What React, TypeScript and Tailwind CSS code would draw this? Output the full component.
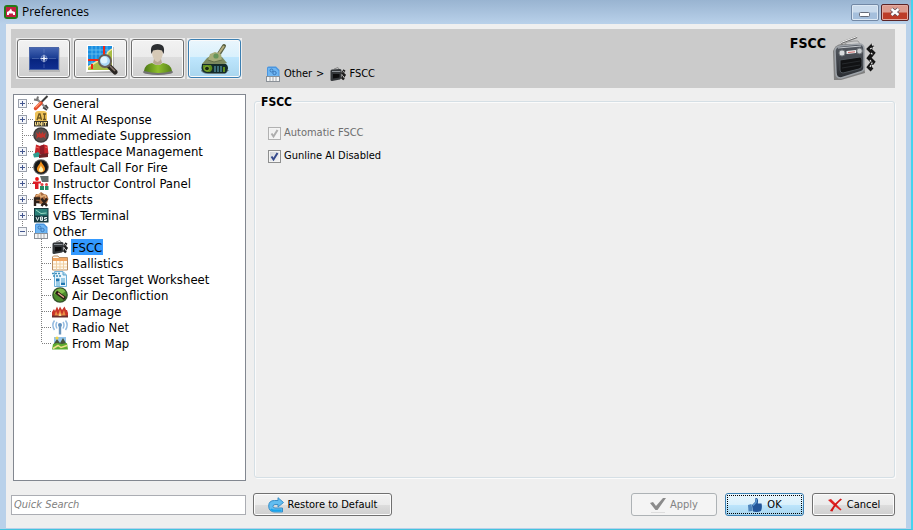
import { useState } from "react";
import type { ReactNode } from "react";

type IconProps = { name: string; className?: string };

const art: Record<string, ReactNode> = {
  tools: (
    <>
      <path d="M4 4 L13 13" stroke="#8d8d8d" strokeWidth="2.200" />
      <path d="M1 4.500 L4 5 L5 1.500" stroke="#777" strokeWidth="2" fill="none" />
      <path d="M10 12.500 L14 15 M12.500 10 L15 13.500" stroke="#444" strokeWidth="1.800" />
      <path d="M14.500 1 L8 7.500" stroke="#3d3d3d" strokeWidth="2" />
      <path d="M8 8 L2.500 13.500" stroke="#e34a2a" strokeWidth="3.400" strokeLinecap="round" />
      <path d="M7.500 7.500 L2.500 12.500" stroke="#ff9d73" strokeWidth="1.200" />
    </>
  ),
  unit: (
    <>
      <path d="M2 2 Q3 0 5 0 H11 Q13 0 14 2 V10 H2Z" fill="#eec25a" />
      <path d="M4 9 L6 3 H7 L8.500 9 M5 7 H8 M10 3 H13 M11.500 3 V8.500 M10 8.500 H13" stroke="#6b5520" strokeWidth="1.300" fill="none" />
      <rect x="1" y="10" width="14" height="5.500" fill="#3a372d" />
      <path d="M2.500 11 V14 H4.500 V11 M6 14.500 V11 L8.500 14.500 V11 M10 11 V14.500 M11 11.500 H14 M12.500 11 V14.500" stroke="#f2d987" fill="none" />
    </>
  ),
  suppress: (
    <>
      <circle cx="8" cy="8" r="7.800" fill="#3a3a3a" />
      <circle cx="8" cy="8" r="6.500" fill="#58504e" />
      <path d="M3 5 L5.500 7.500 L6 4.500 L8 7 L10 4.500 L10.500 7.500 L13 5 L12 9 L13 12 L10.500 10 L8 11 L5.500 10 L3 12 L4 9Z" fill="#c2352d" />
    </>
  ),
  battle: (
    <>
      <path d="M3 1.500 L7 3 L11 1.500 L14.500 2.500 L15.500 11 L11 12 L7 11 L1.500 12.500Z" fill="#c7262a" />
      <path d="M7 3 L11 1.500 L11.500 12 L7 11Z" fill="#8f1c27" />
      <path d="M0 11 L5 9 L7 11 L6 14 L1 14.500Z" fill="#2f9c90" />
      <path d="M6 11.500 L15 10 V14 L6 15Z" fill="#6e2226" />
      <path d="M3 4 L6 5 M12 4 L14 4.500" stroke="#ee6255" />
    </>
  ),
  fire: (
    <>
      <circle cx="8" cy="8" r="7.800" fill="#5a5a5a" />
      <circle cx="8" cy="8" r="6.800" fill="#171717" />
      <path d="M8 1.500 C8 4.500 12.500 7 12 10.500 C11.500 14.500 4.500 14.500 4 10.500 C3.500 7.500 7 6 8 1.500Z" fill="#f08f1a" />
      <path d="M8 6 C8 8.500 10.500 9 10.200 11.200 C9.800 13.500 6.200 13.500 5.900 11.200 C5.700 9.500 7.500 8.500 8 6Z" fill="#fff2ae" />
    </>
  ),
  instructor: (
    <>
      <path d="M7 1 H15.500 V7 H9Z" fill="#616c6a" />
      <circle cx="4" cy="4" r="1.900" fill="#e11" />
      <path d="M0 6.500 H8 V8.500 H5.500 V14 H2 V9 H0Z" fill="#dc1a25" />
      <circle cx="9" cy="9.500" r="1.500" fill="#e14545" />
      <path d="M7 11 H11 V15 H7Z" fill="#238b65" />
      <circle cx="13.500" cy="9.500" r="1.500" fill="#e14545" />
      <path d="M12 11 H15.500 V15 H12Z" fill="#238b65" />
    </>
  ),
  effects: (
    <>
      <path d="M1 7 L3 3 L6 3 L8 1 L11 3 L14 4 L15.500 8 L14 12 L8 13 L1 11Z" fill="#a96c42" />
      <path d="M3 5 L7 3 L8 6 L12 4 L13 7" stroke="#e3ae78" strokeWidth="1.500" fill="none" />
      <path d="M2 15 V7.500 H7 M2 11 H6.500 M8.500 7.500 L14 15 M14 7.500 L8.500 15" stroke="#2d211a" strokeWidth="2.400" fill="none" />
    </>
  ),
  vbs: (
    <>
      <rect x="1" y="1" width="14.500" height="14.500" fill="#17393e" />
      <path d="M2 2 H14.500 V8.500 H2Z" fill="#2a8078" />
      <path d="M3 3 L8 6.500 L13.500 6" stroke="#9adbc5" fill="none" />
      <path d="M3 10 L4.500 13.500 L6 10 M7.500 10 V13.500 H9.500 V10 H7.500 M7.500 12 H9.500 M14 10.500 H11.500 V12 H13.500 V13.500 H11" stroke="#e5eeee" fill="none" />
    </>
  ),
  other: (
    <>
      <path d="M2 2 Q2 .5 3.500 .5 H11 L14.500 4 V11 H2Z" fill="#4a96e0" />
      <path d="M3 2 H10.500 L13.500 5 V10 H3Z" fill="#6fb6f2" />
      <circle cx="6.500" cy="4.500" r="1.500" stroke="#3a76b8" fill="none" />
      <circle cx="9.500" cy="7" r="1.700" stroke="#3a76b8" fill="none" />
      <rect x="1.500" y="10.500" width="13" height="5" fill="#f5f5f5" stroke="#8a9097" />
      <path d="M5 11 V15 M8 11 V15 M11 11 V15" stroke="#a5a9ad" />
    </>
  ),
  radio: (
    <>
      <path d="M4 3 L8 1.500 L9 3" stroke="#888" fill="none" />
      <path d="M.5 5 Q.5 3.500 2 3.500 L10 3 Q11.500 3 11.500 4.500 V12 L10 13.500 L2 15 Q.5 15 .5 14Z" fill="#34373a" />
      <path d="M2 5.500 H10.500" stroke="#8d9297" />
      <path d="M3 8 H9.500 V11.500 L3 12.500Z" fill="#0d0d0e" />
      <path d="M14.500 4 L12.500 7 L14.500 9 L12.500 12 L14 13.500" stroke="#1d1d1d" strokeWidth="2.400" fill="none" />
      <path d="M14 5 L13 6.500 M13.500 10 V11.500" stroke="#b5b5b5" />
    </>
  ),
  table: (
    <>
      <path d="M.5 15 V2 L1.500 1 H6 L7 2.500 H15.500 V15Z" fill="#fffaf0" stroke="#b98d62" />
      <rect x="1" y="3" width="14" height="3" fill="#f2a661" />
      <path d="M1 9 H15 M1 12 H15 M4.500 6 V15 M8 6 V15 M11.500 6 V15" stroke="#f0cfa0" />
    </>
  ),
  sheet: (
    <>
      <path d="M2.500 .5 H11 L14.500 4 V15.500 H2.500Z" fill="#eaf6fd" stroke="#6fb0d8" />
      <path d="M11 1 V4 H14" fill="#a5d5ef" stroke="#5da2ca" />
      <path d="M0 2.500 H9 M1 5 H10" stroke="#3f8fb9" strokeWidth="1.500" strokeDasharray="2 1" />
      <path d="M4 7.500 H7.500 V10.500 H4Z M9 11.500 H13 V14 H9Z" fill="#2078b2" />
      <path d="M9 8 H13 M9 10 H13 M4 12 H8 M4 14 H8" stroke="#4aa1ce" />
    </>
  ),
  air: (
    <>
      <circle cx="8" cy="8" r="7.800" fill="#33512a" />
      <circle cx="8" cy="8" r="6.500" fill="#4c8c2d" />
      <path d="M2 7 A6.300 6.300 0 0 1 13.500 4.500 L8 8Z" fill="#80bd4a" />
      <path d="M4 5 L13 11.500" stroke="#2b1d14" strokeWidth="3.400" />
      <path d="M6 6 L12 10.500" stroke="#e8b092" strokeWidth="1.300" />
    </>
  ),
  damage: (
    <>
      <path d="M0 14 V9 L2 6 L3 8 L5 3.500 L6.500 7 L8 3.500 L10 7 L12.500 3.500 L14 7 L15 7 L16 10 V14Z" fill="#c8352a" />
      <path d="M2 14 L4 8 L6 12 L8 6.500 L10 12 L12 7 L14 14Z" fill="#ea8d45" />
      <path d="M0 12.500 H16 V14.500 H0Z" fill="#6b2f2c" />
      <path d="M6.500 13 L8 9.500 L9.500 13Z" fill="#f7d88e" />
    </>
  ),
  antenna: (
    <>
      <circle cx="8" cy="6" r="2" fill="#5f8fbd" />
      <path d="M8 7 V15.500" stroke="#6a95bd" strokeWidth="2.400" />
      <path d="M5 3 Q3 6 5 9.500 M2.500 1.500 Q-.8 6 2.500 11 M11 3 Q13 6 11 9.500 M13.500 1.500 Q16.800 6 13.500 11" stroke="#94bbe0" strokeWidth="1.500" fill="none" />
    </>
  ),
  frommap: (
    <>
      <path d="M2 2 H14 V9 H2Z" fill="#93c4ea" />
      <path d="M1 10 L5 4 L8 8 L11 3 L15 10Z" fill="#46543c" />
      <path d="M1 9 L5 8 L10 9 L15 8 L16 14.500 H0Z" fill="#5fab30" />
      <path d="M1 13.500 L6 10.500 L9 12.500 L15 10.500" stroke="#efe08a" strokeWidth="1.500" fill="none" />
      <circle cx="5" cy="3" r="1.600" fill="#f0d44a" />
    </>
  ),
};

function Icon({ name, className = "size-4" }: IconProps) {
  return (
    <svg viewBox="0 0 16 16" className={`${className} shrink-0`} aria-hidden="true">
      {art[name]}
    </svg>
  );
}

function AppIcon() {
  return (
    <svg viewBox="0 0 14 14" className="size-[14px]" aria-hidden="true">
      <rect width="14" height="14" rx="3" fill="#237a17" />
      <rect x="2" y="2" width="10" height="10" fill="#c31f42" />
      <path d="M3 7 L5 6 L7 3.500 L8 6 L11 7 V10 H9 V8.500 H5 V10 H3Z" fill="#fff" />
    </svg>
  );
}

function NatoFlag() {
  return (
    <svg viewBox="0 0 32 26" className="h-[26px] w-8" aria-hidden="true">
      <defs>
        <linearGradient id="flag" x1="0" y1="0" x2="0" y2="1">
          <stop stopColor="#4767b3" />
          <stop offset=".5" stopColor="#173a91" />
          <stop offset=".55" stopColor="#07247f" />
          <stop offset="1" stopColor="#102f91" />
        </linearGradient>
      </defs>
      <rect x="1" y="2" width="31" height="24" fill="#999" opacity=".5" />
      <rect x="1.500" y="1.500" width="29" height="22" fill="url(#flag)" stroke="#4b66a7" />
      <path d="M4 12.500 H11 M21 12.500 H28 M16 3 V7 M16 18 V22" stroke="#8094cb" opacity=".4" />
      <circle cx="16" cy="12.500" r="3" stroke="#aabce4" strokeWidth=".6" fill="none" />
      <path d="M16 8 L16.800 11.700 L20.500 12.500 L16.800 13.300 L16 17 L15.200 13.300 L11.500 12.500 L15.200 11.700Z" fill="#f4f8ff" />
    </svg>
  );
}

function MapSearch() {
  return (
    <svg viewBox="0 0 34 32" className="h-8 w-[34px]" aria-hidden="true">
      <path d="M3 4 H30 V30 H3Z" fill="#777" opacity=".4" />
      <path d="M3 2 H29 V28 L2 29Z" fill="#fff" />
      <path d="M4 3 H28 V26 H4Z" fill="#1b8ee0" />
      <path d="M8 3 V26 M12 3 V26 M16 3 V26 M23 3 V26 M4 7 H28 M4 11 H28 M4 20 H27" stroke="#76c8ef" strokeWidth=".7" />
      <path d="M28 6 L24 9 L21 17 L14 18 L9 21 L4 24 V27 H28Z" fill="#a8bd44" />
      <path d="M28 6 L24 9 L21 17 L14 18 L9 21 L4 24" fill="none" stroke="#f5e69a" strokeWidth="1.500" />
      <path d="M20 3 V16 M4 17 H17 M8 21 V26" stroke="#f32516" strokeWidth="2" />
      <path d="M25 23 L31 29" stroke="#292522" strokeWidth="5" strokeLinecap="round" />
      <path d="M26 23 L31 28" stroke="#85736a" strokeWidth="1.500" />
      <circle cx="21" cy="18" r="6" fill="#a9d6f5" stroke="#665d58" strokeWidth="2" />
      <circle cx="20" cy="17" r="3.500" fill="#eefaff" opacity=".8" />
    </svg>
  );
}

function Person() {
  return (
    <svg viewBox="0 0 34 34" className="size-[34px]" aria-hidden="true">
      <defs>
        <linearGradient id="shirt" x1="0" x2="1">
          <stop stopColor="#4b7716" />
          <stop offset=".5" stopColor="#90c02c" />
          <stop offset="1" stopColor="#547f19" />
        </linearGradient>
      </defs>
      <ellipse cx="17" cy="30" rx="15" ry="3" fill="#333" opacity=".6" />
      <path d="M3 29 Q4 22 11 21 Q17 25 22 21 Q30 22 31 29 Q18 33 3 29Z" fill="url(#shirt)" />
      <path d="M13 17 H20 L21 21 Q17 25 12 21Z" fill="#b7a78f" />
      <path d="M11 9 Q11 18 16.500 20 Q22 18 22 9 Q22 5 17 5 Q11 5 11 9Z" fill="#d6c9b6" />
      <path d="M10.500 12 Q8 2 16.500 2 Q25 2 22.500 12 L21 8.500 Q17 7 12 8.500Z" fill="#2c2e31" />
    </svg>
  );
}

function Tank() {
  return (
    <svg viewBox="0 0 34 34" className="size-[34px]" aria-hidden="true">
      <path d="M3 28 Q3 31 10 32 L27 32 L31 28Z" fill="#47534e" opacity=".7" />
      <path d="M19 15 L26 4" stroke="#596143" strokeWidth="4" strokeLinecap="round" />
      <path d="M19 14 L26 4" stroke="#b6ae7e" strokeWidth="2" />
      <path d="M4 22 L9 16 L14 13 L24 15 L29 21 L21 24 H6Z" fill="#7c8a5f" />
      <path d="M10 18 L12 12 L17 10 L23 12 L24 18 L16 20Z" fill="#a5ad7a" />
      <path d="M10 18 L16 20 L24 18" stroke="#66714a" fill="none" />
      <circle cx="18" cy="14" r="2.600" fill="#66955a" />
      <path d="M4 22 H28 Q32 25 28 31 H8 Q2 30 4 22Z" fill="#142b2b" />
      <path d="M5 23 H13 Q16 27 12 30 H9 Q4 29 5 23Z" fill="#5d8d1c" />
      <circle cx="9" cy="26.500" r="2.400" fill="#182811" stroke="#8cb338" />
      <path d="M17 24 V30 M20 24 V30 M23 24 V30" stroke="#3c6d78" strokeWidth="2" />
      <path d="M26 25 V30" stroke="#5d8d1c" strokeWidth="2" />
    </svg>
  );
}

function LargeRadio() {
  return (
    <svg viewBox="0 0 46 48" className="h-12 w-[46px]" aria-hidden="true">
      <defs>
        <linearGradient id="radio-body" x1="0" y1="0" x2="0" y2="1">
          <stop stopColor="#565b63" />
          <stop offset="1" stopColor="#2a2d32" />
        </linearGradient>
      </defs>
      <path d="M2 45 L1 16 Q3 10 9 9 L29 9 L33 38 L9 45Z" fill="#111" opacity=".4" />
      <path d="M9 8 L25 2" stroke="#6b6b6b" strokeWidth="2" />
      <path d="M9 7.500 L25 1.500" stroke="#f3f3f3" />
      <path d="M11 10 Q15 6 22 6 L26 6 L28 9" stroke="#999" fill="none" />
      <path d="M3 16 Q3 12 8 11 L27 9 Q32 9 32 14 V33 Q32 36 28 37 L9 43 Q4 43 4 38Z" fill="url(#radio-body)" stroke="#9da2a8" strokeWidth="1.500" />
      <path d="M6 13 L29 11" stroke="#c5c9cd" />
      <circle cx="10" cy="18" r="3" fill="#d9dcde" stroke="#777c80" />
      <circle cx="27.500" cy="16" r="2.800" fill="#c9cdd0" stroke="#777c80" />
      <path d="M14.500 16 L24 15 V18 L14.500 19Z" fill="#f2f2f2" />
      <path d="M16 17.500 L23 16.800" stroke="#c66" />
      <path d="M8 25 L28 22 Q30 22 30 25 V31 Q30 33 27 34 L11 38 Q8 38 8 35Z" fill="#111214" stroke="#4d5359" />
      <path d="M10 29 L28 26 M10 33 L28 30" stroke="#26292c" />
      <path d="M41 10 L37 14 L41 18 L37 23 L41 27 L37 32 L40 35" stroke="#161616" strokeWidth="4" fill="none" />
      <path d="M40 9 L42 12 L38 14 M39 18 L41 20 M38 25 L40 28 L38 32 M40 30 L42 32" stroke="#e5e5e5" strokeWidth="1.200" fill="none" strokeDasharray="2 1" />
    </svg>
  );
}

type TreeItem = { icon: string; label: string; leaf?: boolean };

const topics: TreeItem[] = [
  { icon: "tools", label: "General" },
  { icon: "unit", label: "Unit AI Response" },
  { icon: "suppress", label: "Immediate Suppression", leaf: true },
  { icon: "battle", label: "Battlespace Management" },
  { icon: "fire", label: "Default Call For Fire" },
  { icon: "instructor", label: "Instructor Control Panel" },
  { icon: "effects", label: "Effects" },
  { icon: "vbs", label: "VBS Terminal" },
  { icon: "other", label: "Other" },
];

const children: TreeItem[] = [
  { icon: "radio", label: "FSCC" },
  { icon: "table", label: "Ballistics" },
  { icon: "sheet", label: "Asset Target Worksheet" },
  { icon: "air", label: "Air Deconfliction" },
  { icon: "damage", label: "Damage" },
  { icon: "antenna", label: "Radio Net" },
  { icon: "frommap", label: "From Map" },
];

function Branch({ first, last, leaf, open }: { first: boolean; last: boolean; leaf?: boolean; open: boolean }) {
  return (
    <svg viewBox="0 0 19 16" className="h-4 w-[19px] shrink-0" shapeRendering="crispEdges" aria-hidden="true">
      <path d={`M8.500 ${first ? 8 : 0} V${last ? 8 : 16} M8 8.500 H19`} stroke="#808080" strokeDasharray="1 1" />
      {!leaf && (
        <>
          <rect x="4.500" y="4.500" width="8" height="8" fill="#f4f6fa" stroke="#9aa0ab" />
          <path d={open ? "M6 8.500 H11" : "M6 8.500 H11 M8.500 6 V11"} stroke="#44578f" />
        </>
      )}
    </svg>
  );
}

function ChildBranch({ last }: { last: boolean }) {
  return (
    <svg viewBox="0 0 38 16" className="h-4 w-[38px] shrink-0" shapeRendering="crispEdges" aria-hidden="true">
      <path d={`M27.500 0 V${last ? 8 : 16} M28 8.500 H38`} stroke="#808080" strokeDasharray="1 1" />
    </svg>
  );
}

function Tree() {
  const [selected, setSelected] = useState("FSCC");
  const label = (text: string) => (
    <button
      type="button"
      onClick={() => setSelected(text)}
      className={`ml-[3px] h-4 px-px pt-px leading-4 whitespace-nowrap ${selected === text ? "bg-[#3399ff]" : ""}`}
    >
      {text}
    </button>
  );
  return (
    <ul role="tree" aria-label="Preference topics" className="ml-0.5 flex-1 border border-[#828790] bg-white text-[13px]">
      {topics.map((t, i) => (
        <li key={t.label} role="treeitem" aria-expanded={t.label === "Other"} aria-selected={selected === t.label}>
          <div className="flex h-4">
            <Branch first={i === 0} last={i === topics.length - 1} leaf={t.leaf} open={t.label === "Other"} />
            <Icon name={t.icon} />
            {label(t.label)}
          </div>
          {t.label === "Other" && (
            <ul role="group">
              {children.map((c, j) => (
                <li key={c.label} role="treeitem" aria-selected={selected === c.label} className="flex h-4">
                  <ChildBranch last={j === children.length - 1} />
                  <Icon name={c.icon} />
                  {label(c.label)}
                </li>
              ))}
            </ul>
          )}
        </li>
      ))}
    </ul>
  );
}

function ToolButton({ label, active, children: content }: { label: string; active?: boolean; children: ReactNode }) {
  return (
    <div className="bg-[#ededed] p-px">
      <button
        type="button"
        aria-label={label}
        className={`flex h-[39px] w-[53px] items-center justify-center rounded-[3px] border ${
          active
            ? "border-[#3c7fb1] bg-[linear-gradient(#eaf6fd,#d9f0fc_47%,#bee6fd_47%,#a9d6ee)]"
            : "border-[#707070] bg-[linear-gradient(#f2f2f2,#ebebeb_47%,#dddddd_47%,#cfcfcf)]"
        } inset-shadow-[0_0_0_1px_#fafafa]`}
      >
        {content}
      </button>
    </div>
  );
}

function Check({ label, disabled }: { label: string; disabled?: boolean }) {
  const [on, setOn] = useState(true);
  return (
    <label className={`flex h-[13px] items-center gap-[3px] ${disabled ? "text-[#6d6d6d]" : ""}`}>
      <span className="relative size-[13px]">
        <input
          type="checkbox"
          checked={on}
          disabled={disabled}
          onChange={(e) => setOn(e.target.checked)}
          className="block size-[13px] appearance-none border border-[#8e8f8f] bg-linear-to-br from-[#cfd3d9] to-[#f6f6f6] inset-shadow-[0_0_0_1px_#f4f4f4] disabled:border-[#b1b1b1] disabled:from-[#eeeeee]"
        />
        {on && (
          <svg viewBox="0 0 13 13" className="pointer-events-none absolute inset-0" aria-hidden="true">
            <path d="M3.500 6.500 L5.500 9.500 L9.500 3" fill="none" stroke={disabled ? "#adadad" : "#34498c"} strokeWidth="2" />
          </svg>
        )}
      </span>
      {label}
    </label>
  );
}

const normalButton =
  "flex h-[23px] items-center justify-center rounded-[3px] border border-[#707070] bg-[linear-gradient(#f2f2f2,#ebebeb_50%,#dddddd_50%,#cfcfcf)] pt-px inset-shadow-[0_0_0_1px_#fcfcfc]";

export default function App() {
  return (
    <div className="flex min-h-screen flex-col border-r-2 border-b border-r-[#45d3ee] border-b-[#45c3de] bg-[#b9d1ea] font-['DejaVu_Sans_Condensed','DejaVu_Sans',sans-serif] text-[11px] text-black">
      <header className="flex h-6 items-center bg-linear-to-b from-[#99b4d1] to-[#b9d1ea] pr-0.5 pl-1">
        <AppIcon />
        <h1 className="ml-1 font-['Open_Sans','Noto_Sans',sans-serif] text-[12px]">Preferences</h1>
        <div className="ml-auto flex gap-0.5">
          <button type="button" aria-label="Minimize" className="flex h-[17px] w-7 items-center justify-center rounded-[2px] border border-[#7288a5] bg-linear-to-b from-[#c9daec] from-45% to-[#a5bfdc] to-55% inset-shadow-[0_0_0_1px_#dce8f4]">
            <svg viewBox="0 0 12 5" className="mt-1 h-[5px] w-3" aria-hidden="true">
              <rect x=".5" y=".5" width="10" height="4" rx="1" fill="#fff" stroke="#646b78" />
            </svg>
          </button>
          <button type="button" aria-label="Close" className="flex h-[17px] w-7 items-center justify-center rounded-[2px] border border-[#5b2426] bg-linear-to-b from-[#dc9b8e] from-45% to-[#bd3c28] to-55% inset-shadow-[0_0_0_1px_#e4aaa0]">
            <svg viewBox="0 0 12 10" className="h-[10px] w-3" aria-hidden="true">
              <path d="M2.500 2 L9.500 8 M9.500 2 L2.500 8" stroke="#5c4a55" strokeWidth="4" />
              <path d="M2.500 2 L9.500 8 M9.500 2 L2.500 8" stroke="#fff" strokeWidth="2.400" />
            </svg>
          </button>
        </div>
      </header>

      <main className="mr-[5px] mb-px ml-1.5 flex flex-1 flex-col bg-[#efefef] pt-[5px] pr-[11px] pb-3 pl-[5px]">
        <section className="flex h-[59px] bg-[#cbcbcb] pl-[5px]">
          <nav aria-label="Categories" className="flex w-[249px] items-start gap-0.5 pt-[9px]">
            <ToolButton label="NATO"><NatoFlag /></ToolButton>
            <ToolButton label="Map"><MapSearch /></ToolButton>
            <ToolButton label="User"><Person /></ToolButton>
            <ToolButton label="Simulation" active><Tank /></ToolButton>
          </nav>
          <nav aria-label="Breadcrumb" className="flex items-center self-end pb-1.5">
            <Icon name="other" />
            <a href="#other" className="ml-[3px]">Other</a>
            <span className="mr-1.5 ml-1">&gt;</span>
            <Icon name="radio" />
            <span className="ml-[3px]">FSCC</span>
          </nav>
          <h2 className="mt-1.5 mr-1.5 ml-auto text-[14px] leading-4 font-bold">FSCC</h2>
          <div className="mt-1.5 mr-[17px] h-12"><LargeRadio /></div>
        </section>

        <div className="mt-1.5 flex flex-1 gap-2">
          <div className="flex w-[235px] shrink-0 flex-col"><Tree /></div>
          <fieldset className="mb-[3px] flex flex-1 flex-col gap-[10px] rounded-[3px] border border-[#d5dfe5] px-[13px] pt-[18px] shadow-[inset_1px_1px_0_#fbfbfb,1px_1px_0_#fbfbfb]">
            <legend className="-ml-2 px-px pt-px text-[12px] leading-[14px] font-bold">FSCC</legend>
            <Check label="Automatic FSCC" disabled />
            <Check label="Gunline AI Disabled" />
          </fieldset>
        </div>

        <footer className="mt-3 flex items-center">
          <input
            type="search"
            aria-label="Quick Search"
            placeholder="Quick Search"
            className="h-5 w-[235px] border border-[#abadb3] bg-white px-0.5 italic placeholder:text-[#808080]"
          />
          <button type="button" className={`${normalButton} ml-[7px] w-[139px] gap-1`}>
            <svg viewBox="0 0 16 16" className="size-4" aria-hidden="true">
              <path
                d="M10 .7 L15.500 5.500 L10 10 V7.500 H7 Q5 7.500 5 9.500 Q5 11 7 11 H14.500 V15 H6 Q.7 14.500 .7 9 Q.7 3.500 6.500 3.500 H10Z"
                fill="#62bdf0"
                stroke="#3a8fc8"
              />
              <path d="M3 12 Q4 13.500 6 13.500 H13.500" stroke="#18a4ec" strokeWidth="2" fill="none" />
            </svg>
            Restore to Default
          </button>
          <button type="button" disabled className="ml-auto flex h-[23px] w-[86px] items-center justify-center gap-1 rounded-[3px] border border-[#adb2b5] bg-[#f4f4f4] pt-px text-[#838383]">
            <svg viewBox="0 0 16 16" className="size-4" aria-hidden="true">
              <path d="M0 6 L3 5 L6 9 L13 1 L16 1 L7.500 13 H5.500Z" fill="#8b8b8b" />
              <path d="M1 15.500 H15" stroke="#ddd" />
            </svg>
            Apply
          </button>
          <button type="submit" className="ml-2 flex h-[23px] w-[79px] rounded-[3px] border border-[#3c7fb1] bg-[linear-gradient(#eaf6fd,#d9f0fc_50%,#bee6fd_50%,#a9d6ee)] p-px">
            <span className="flex h-full w-full items-center justify-center gap-1 border border-dotted border-black pt-px">
              <svg viewBox="0 0 16 16" className="size-4" aria-hidden="true">
                <path d="M1 8 L4.500 7 L5.500 14 L1.500 14.500Z" fill="#4f86bd" />
                <path d="M5 8 L8 5 L8.500 1 Q11.500 .5 11 5 L10.800 6.500 H14.500 Q15.500 10 14 14 Q10 15.500 6 14.500Z" fill="#23569a" />
                <path d="M6 8.500 L9 5.500 L9.500 2" fill="none" stroke="#5f9bd2" strokeWidth="1.500" />
              </svg>
              OK
            </span>
          </button>
          <button type="button" className={`${normalButton} ml-2 w-[83px] gap-1`}>
            <svg viewBox="0 0 16 16" className="size-4" aria-hidden="true">
              <path d="M1 3 L4 2 Q9 7 14.500 12.500 L13.500 13.500 Q7 9 1 3Z" fill="#e02323" />
              <path d="M13.500 1.500 L15 2.500 Q8 8 5.500 14.500 L3 14 Q7 6.500 13.500 1.500Z" fill="#d31515" />
            </svg>
            Cancel
          </button>
        </footer>
      </main>
    </div>
  );
}
